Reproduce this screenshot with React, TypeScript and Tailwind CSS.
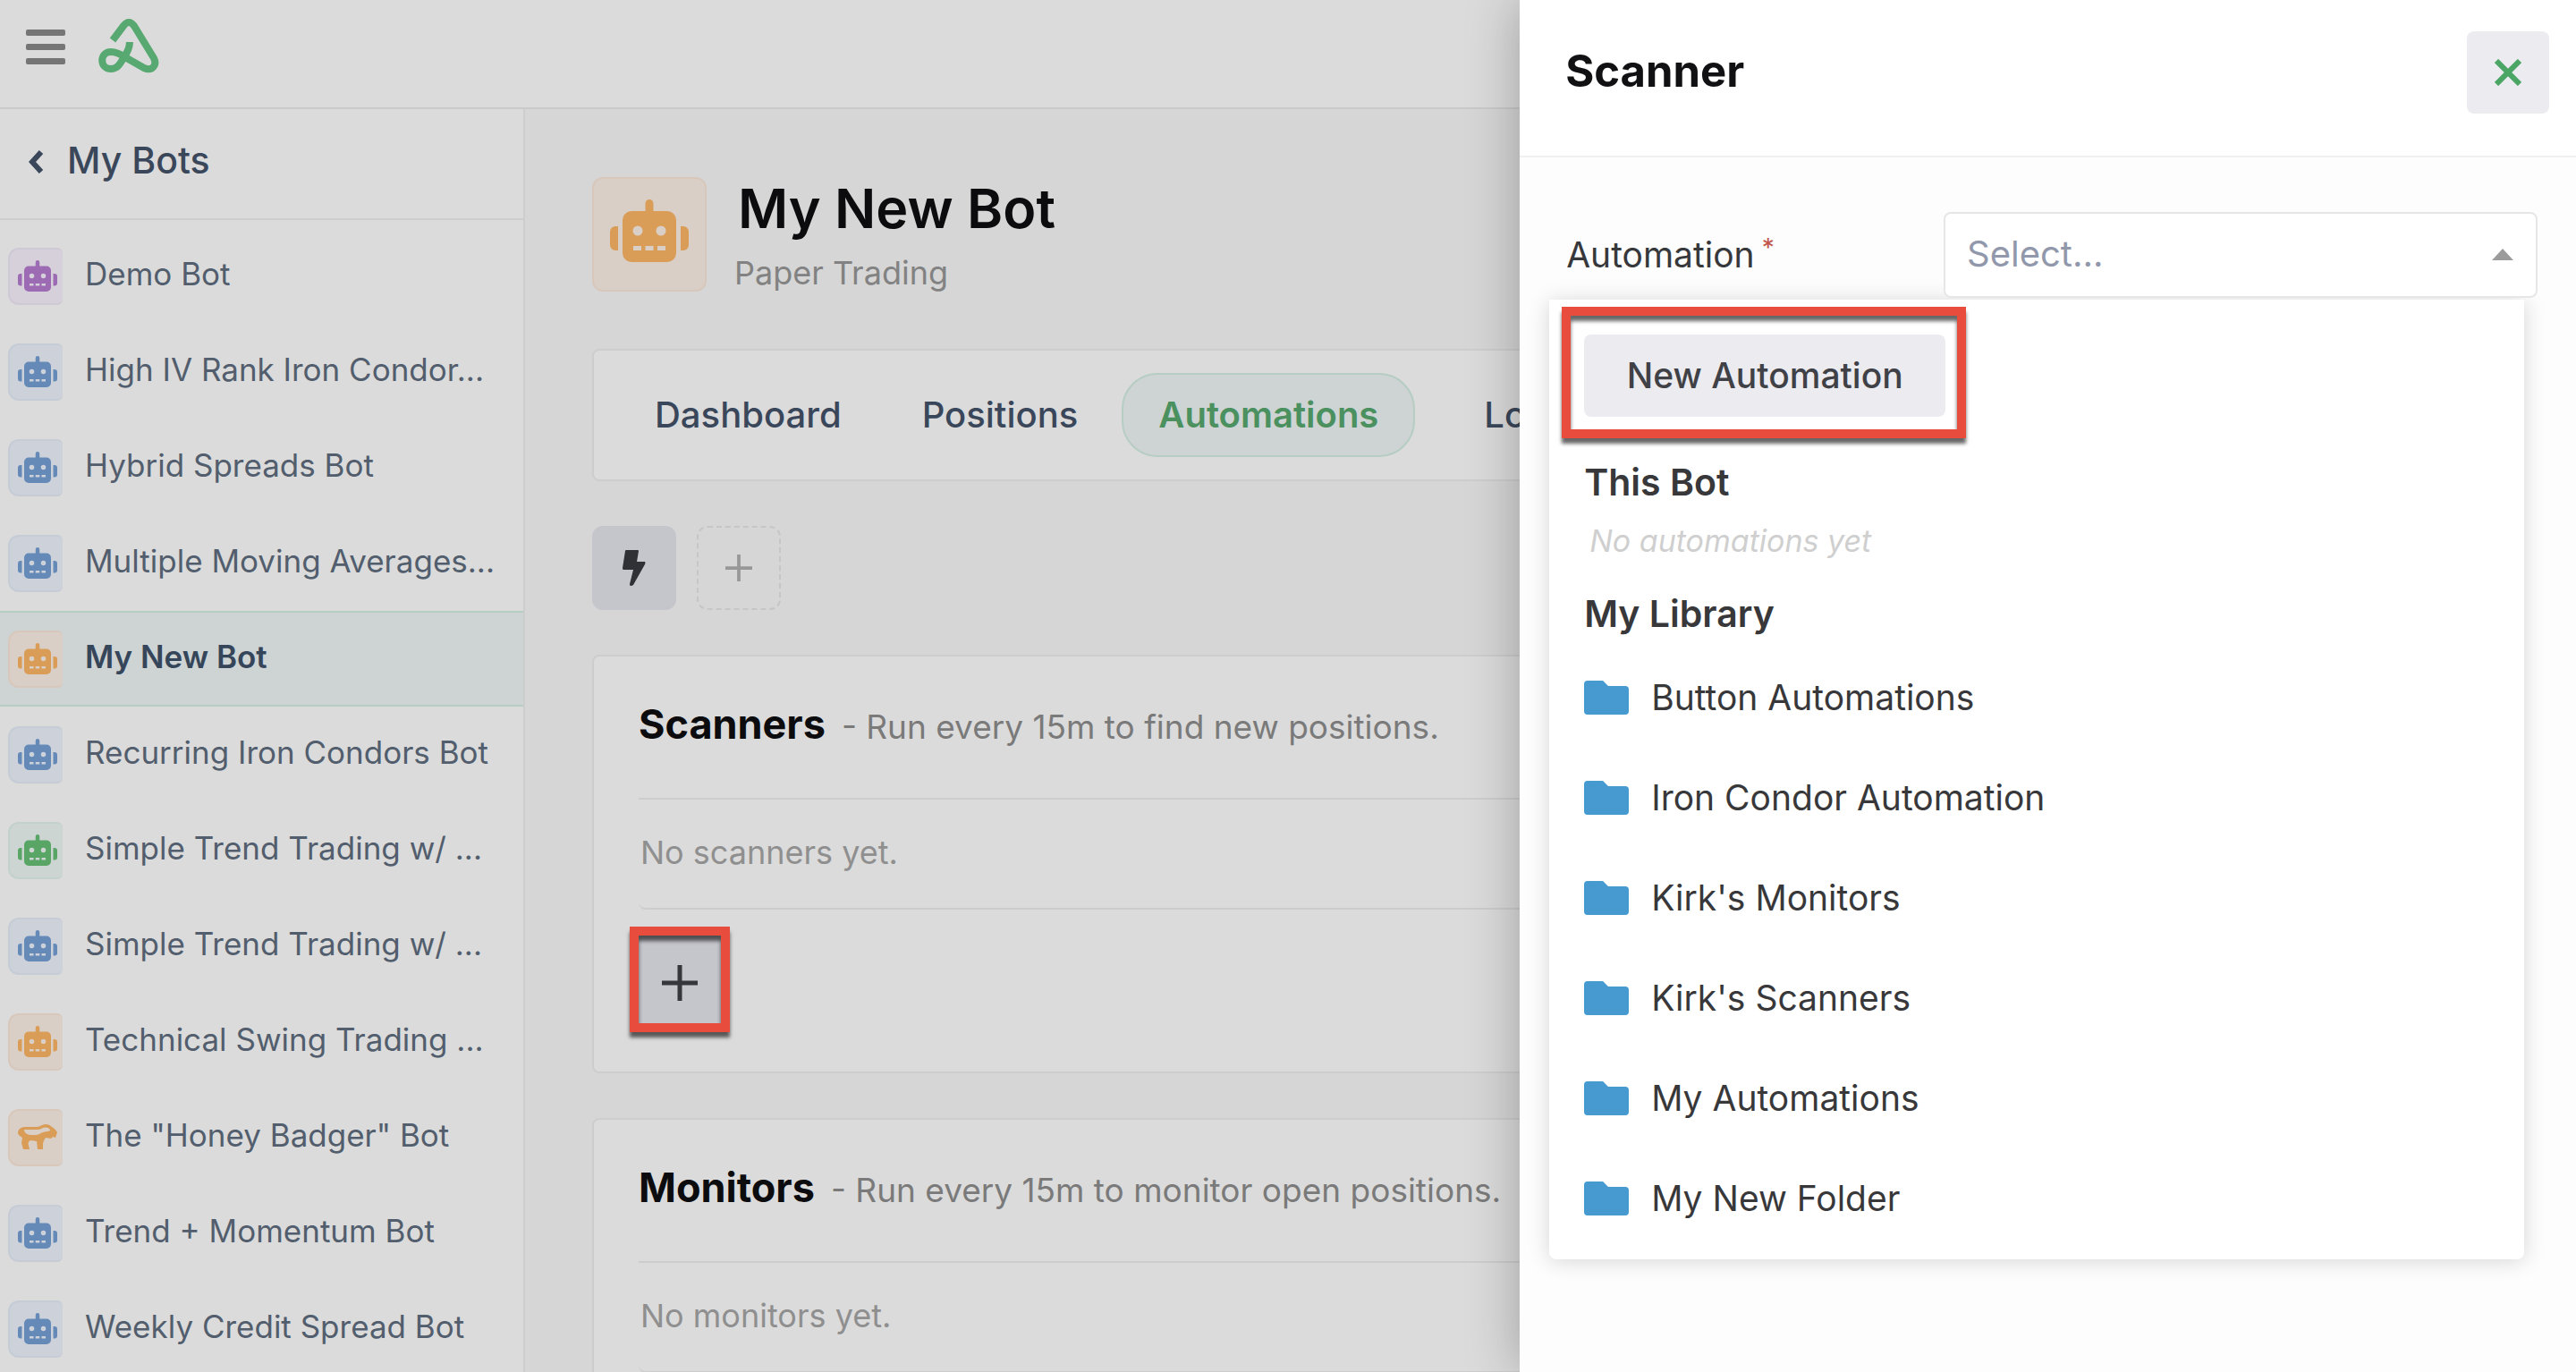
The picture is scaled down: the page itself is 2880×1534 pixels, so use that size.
import { ReactNode, useState } from "react";

type Tone = "purple" | "blue" | "orange" | "green";

const tones: Record<Tone, string> = {
  purple: "bg-[#d5d0d9] border-[#cfc8d5] text-[#9d6bb3]",
  blue: "bg-[#cdd2da] border-[#c5ccd5] text-[#668ab8]",
  orange: "bg-[#dacfc6] border-[#d8c7bb] text-[#d99d58]",
  green: "bg-[#cdd5d2] border-[#c3d1cb] text-[#58a566]",
};

const bots: { name: string; tone: Tone; badger?: boolean }[] = [
  { name: "Demo Bot", tone: "purple" },
  { name: "High IV Rank Iron Condor...", tone: "blue" },
  { name: "Hybrid Spreads Bot", tone: "blue" },
  { name: "Multiple Moving Averages...", tone: "blue" },
  { name: "My New Bot", tone: "orange" },
  { name: "Recurring Iron Condors Bot", tone: "blue" },
  { name: "Simple Trend Trading w/ ...", tone: "green" },
  { name: "Simple Trend Trading w/ ...", tone: "blue" },
  { name: "Technical Swing Trading ...", tone: "orange" },
  { name: 'The "Honey Badger" Bot', tone: "orange", badger: true },
  { name: "Trend + Momentum Bot", tone: "blue" },
  { name: "Weekly Credit Spread Bot", tone: "blue" },
];

const tabs = ["Dashboard", "Positions", "Automations", "Logs"];

const folders = [
  "Button Automations",
  "Iron Condor Automation",
  "Kirk's Monitors",
  "Kirk's Scanners",
  "My Automations",
  "My New Folder",
];

const RobotIcon = ({ className }: { className: string }) => (
  <svg viewBox="0 0 88 70" fill="currentColor" className={className}>
    <path
      fillRule="evenodd"
      d="M44 0a4.500 4.500 0 0 1 4.500 4.500V13H64a10 10 0 0 1 10 10v37a10 10 0 0 1-10 10H24a10 10 0 0 1-10-10V23a10 10 0 0 1 10-10h15.500V4.500A4.500 4.500 0 0 1 44 0ZM31 29.500a5.500 5.500 0 1 0 0 11 5.500 5.500 0 0 0 0-11ZM57 29.500a5.500 5.500 0 1 0 0 11 5.500 5.500 0 0 0 0-11ZM26 52v5h9v-5ZM39.500 52v5h9v-5ZM53 52v5h9v-5Z"
    />
    <path d="M9 30v27H6a6 6 0 0 1-6-6V36a6 6 0 0 1 6-6ZM79 30v27h3a6 6 0 0 0 6-6V36a6 6 0 0 0-6-6Z" />
  </svg>
);

const BadgerIcon = ({ className }: { className: string }) => (
  <svg viewBox="0 0 44 29" fill="currentColor" className={className}>
    <path
      fillRule="evenodd"
      d="M0 10C0 6 3 3 8 3h13c4 0 6-3 10-3 3 0 5 1 7 3 2 1 4 3 6 6l-2 6-3-1-2 2-6-1c-2 3-3 5-3 8v5h-6l-1-9-7-1c-2 1-3 3-2 6l1 4H6l-2-7 1-6-3-2Q0 11 0 10ZM7 6q0 5 7 6h6c4 0 7-4 13-4 2 0 3-1 3-2-2-3-5-3-8-2-3 2-5 2-8 2Z"
    />
  </svg>
);

const Logo = () => (
  <svg
    viewBox="0 0 68 62"
    fill="none"
    stroke="#58a871"
    strokeWidth="8"
    strokeLinejoin="round"
    className="h-[62px] w-[68px]"
  >
    <path d="M16 25 28 9Q34 1 40 9L62 45C66 53 60 60 51 56L30 44C24 40 20 38 14 38C1 38 1 57 14 57C22 57 25 50 28 45Q35 35 35 27" />
  </svg>
);

const BoltIcon = () => (
  <svg viewBox="0 0 26 40" fill="#2f3135" className="h-10 w-[26px]">
    <path d="M4 0h13q1 0 1 1l-2 12h9q1 1 0 3L12 39q-1 1-3 1-1 0-1-2l4-16H1q-1 0-1-2L3 1q0-1 1-1Z" />
  </svg>
);

const PlusIcon = ({ className }: { className: string }) => (
  <svg viewBox="0 0 40 40" fill="none" stroke="currentColor" className={className}>
    <path d="M20 0v40M0 20h40" strokeWidth="5" />
  </svg>
);

const FolderIcon = () => (
  <svg viewBox="0 0 50 38" fill="#469ad0" className="h-[38px] w-[50px]">
    <path d="M4 0h16q2 0 3 2l4 4h19q4 0 4 4v24q0 4-4 4H4q-4 0-4-4V4q0-4 4-4Z" />
  </svg>
);

// Red frame drawn around the control the reader should click
const Highlight = ({ className, children }: { className: string; children: ReactNode }) => (
  <div className="relative w-fit">
    {children}
    <div
      className={`pointer-events-none absolute border-10 border-[#e84c3d] shadow-[0_6px_4px_rgba(0,0,0,0.6),inset_0_6px_4px_rgba(0,0,0,0.6)] ${className}`}
    />
  </div>
);

const Sidebar = () => (
  <aside className="w-[587px] shrink-0 border-r-2 border-[#cdcdcd] bg-[#dbdbdb]">
    <div className="flex h-[124px] items-center border-b-2 border-[#cdcdcd] pb-2 pl-8">
      <a href="#bots" className="flex items-center gap-[26px] text-[41px] leading-[48px] font-medium text-[#3a475a]">
        <svg viewBox="0 0 17 26" fill="none" stroke="currentColor" strokeWidth="6" className="mt-1 h-[26px] w-[17px]">
          <path d="M14 2 4 13l10 11" />
        </svg>
        My Bots
      </a>
    </div>
    <nav className="pt-[9px]">
      {bots.map((bot, i) => {
        const active = bot.name === "My New Bot";
        return (
          <a
            key={i}
            href="#bot"
            className={`flex h-[107px] items-center gap-[25px] pl-[9px] text-[35px] ${
              active
                ? "border-y-2 border-[#b5cdc2] bg-[#ced3d3] font-semibold text-[#36465a]"
                : "text-[#525e6d]"
            }`}
          >
            <span
              className={`flex h-16 w-[61px] shrink-0 items-center rounded-l-[12px] rounded-r-[6px] border-y-2 border-l-2 pl-[9px] ${tones[bot.tone]}`}
            >
              {bot.badger ? <BadgerIcon className="h-[29px] w-11" /> : <RobotIcon className="h-[35px] w-11" />}
            </span>
            <span className="pb-1 whitespace-nowrap">{bot.name}</span>
          </a>
        );
      })}
    </nav>
  </aside>
);

const AutomationCard = ({ title, text, empty, children }: { title: string; text: string; empty: string; children?: ReactNode }) => (
  <section className="rounded-lg border-2 border-[#cdcdcd] bg-[#dbdbdb] pb-[54px] pl-[50px]">
    <div className="flex h-[160px] items-baseline gap-[18px] border-b-2 border-[#cdcdcd] pt-[46px] whitespace-nowrap">
      <h2 className="text-[45px] leading-[60px] font-bold text-[#0c0c0e]">{title}</h2>
      <p className="text-[37px] leading-[60px] text-[#7a7a7a]">{text}</p>
    </div>
    <p className="flex h-[123px] items-center rounded-bl-lg border-b-2 border-[#cdcdcd] pb-1 pl-[2px] text-4xl text-[#8f8f8f]">
      {empty}
    </p>
    {children}
  </section>
);

const Drawer = () => {
  const [value, setValue] = useState("");

  return (
    <aside className="absolute inset-y-0 right-0 w-[41%] overflow-hidden bg-[#fdfdfd] shadow-[0_0_56px_rgba(0,0,0,0.28)]">
      <header className="flex h-[176px] items-start justify-between border-b-2 border-[#f0f0f1] bg-white pt-[35px] pr-[30px] pl-[51px]">
        <h2 className="text-[49px] leading-[90px] font-bold text-[#111113]">Scanner</h2>
        <button
          type="button"
          aria-label="Close"
          className="flex size-[92px] items-center justify-center rounded-lg bg-[#ebebf0] text-[#4ba565]"
        >
          <svg viewBox="0 0 30 30" fill="none" stroke="currentColor" strokeWidth="6" className="size-[30px]">
            <path d="M2 2 28 28M28 2 2 28" />
          </svg>
        </button>
      </header>

      <div className="flex items-center justify-between pt-[61px] pr-[43px] pl-[52px]">
        <label htmlFor="automation" className="flex gap-2 text-[39px] text-[#37383b]">
          Automation
          <span className="text-[28px] text-[#c0564b]">*</span>
        </label>
        <div className="relative w-[664px]">
          <select
            id="automation"
            value={value}
            onChange={(e) => setValue(e.target.value)}
            className="h-24 w-full appearance-none rounded-lg border-2 border-[#e6e6e9] bg-white px-6 pb-[2px] text-[40px] text-[#9198ab]"
          >
            <option value="">Select...</option>
            {folders.map((folder) => (
              <option key={folder}>{folder}</option>
            ))}
          </select>
          <svg viewBox="0 0 24 13" fill="#9b9b9b" className="pointer-events-none absolute top-[41px] right-[27px] h-[13px] w-6">
            <path d="M12 0 24 13H0Z" />
          </svg>
        </div>
      </div>

      <div className="mt-[2px] mr-[58px] ml-[33px] rounded-b-lg bg-white px-[39px] pt-[39px] pb-3 shadow-[0_2px_24px_rgba(0,0,0,0.16)]">
        <Highlight className="-top-[31px] -right-[23px] -bottom-[24px] -left-[25px]">
          <button type="button" className="h-[92px] w-[404px] rounded-lg bg-[#ebebf0] text-[39px] font-medium text-[#404146]">
            New Automation
          </button>
        </Highlight>
        <h3 className="mt-[47px] text-[41px] leading-[52px] font-semibold text-[#38383a]">This Bot</h3>
        <p className="mt-[17px] pl-[6px] text-[34px] leading-[46px] text-[#cfcfcf] italic">No automations yet</p>
        <h3 className="mt-[32px] text-[41px] leading-[52px] font-semibold text-[#38383a]">My Library</h3>
        <ul className="mt-3">
          {folders.map((folder) => (
            <li key={folder}>
              <button type="button" className="flex h-28 w-full items-center gap-[25px] text-[39px] text-[#38383a]">
                <FolderIcon />
                {folder}
              </button>
            </li>
          ))}
        </ul>
      </div>
    </aside>
  );
};

export default function App() {
  return (
    <div className="relative flex h-screen flex-col overflow-hidden bg-[#d6d6d6] font-['Inter',sans-serif]">
      <header className="flex h-[122px] shrink-0 items-start gap-[37px] border-b-2 border-[#cacaca] bg-[#dbdbdb] pt-[20px] pl-[29px]">
        <button type="button" aria-label="Menu" className="mt-[13px] flex w-11 flex-col gap-[9px]">
          <span className="h-[7px] rounded-xs bg-[#757575]" />
          <span className="h-[7px] rounded-xs bg-[#757575]" />
          <span className="h-[7px] rounded-xs bg-[#757575]" />
        </button>
        <Logo />
      </header>

      <div className="flex min-h-0 flex-1">
        <Sidebar />
        <main className="flex-1 pt-[76px] pl-[75px]">
          <div className="flex gap-[31px]">
            <div className={`flex size-32 items-center justify-center rounded-xl border-2 pb-2 ${tones.orange}`}>
              <RobotIcon className="h-[70px] w-[88px]" />
            </div>
            <div>
              <h1 className="pl-1 text-[61px] leading-[70px] font-semibold text-[#0c0c0e]">My New Bot</h1>
              <p className="text-4xl leading-[74px] text-[#828282]">Paper Trading</p>
            </div>
          </div>

          <nav className="mt-12 flex h-[148px] items-center rounded-lg border-2 border-[#cdcdcd] bg-[#dbdbdb] pl-[27px]">
            {tabs.map((tab) => (
              <a
                key={tab}
                href="#tab"
                className={`mr-[8px] flex h-[94px] items-center rounded-[40px] border-2 px-[39px] text-[40px] last:ml-7 ${
                  tab === "Automations"
                    ? "border-[#b5cdc2] bg-[#ced3d3] font-semibold text-[#4b905f]"
                    : "border-transparent font-medium text-[#3a475a]"
                }`}
              >
                {tab}
              </a>
            ))}
          </nav>

          <div className="my-[50px] flex gap-[23px]">
            <button type="button" aria-label="Automations" className="flex size-[94px] items-center justify-center rounded-xl bg-[#c5c5cc]">
              <BoltIcon />
            </button>
            <button
              type="button"
              aria-label="Add group"
              className="flex size-[94px] items-center justify-center rounded-xl border-2 border-dashed border-[#c6c6c6] text-[#989898]"
            >
              <PlusIcon className="size-[30px]" />
            </button>
          </div>

          <div className="flex flex-col gap-[50px]">
            <AutomationCard title="Scanners" text="- Run every 15m to find new positions." empty="No scanners yet.">
              <div className="pt-[29px]">
                <Highlight className="-top-[10px] -right-[10px] -bottom-[10px] -left-[10px]">
                  <button type="button" aria-label="Add scanner" className="flex h-[98px] w-[92px] items-center justify-center bg-[#c5c5cc] pt-2 text-[#35373b]">
                    <PlusIcon className="size-10" />
                  </button>
                </Highlight>
              </div>
            </AutomationCard>
            <AutomationCard title="Monitors" text="- Run every 15m to monitor open positions." empty="No monitors yet." />
          </div>
        </main>
      </div>

      <Drawer />
    </div>
  );
}
